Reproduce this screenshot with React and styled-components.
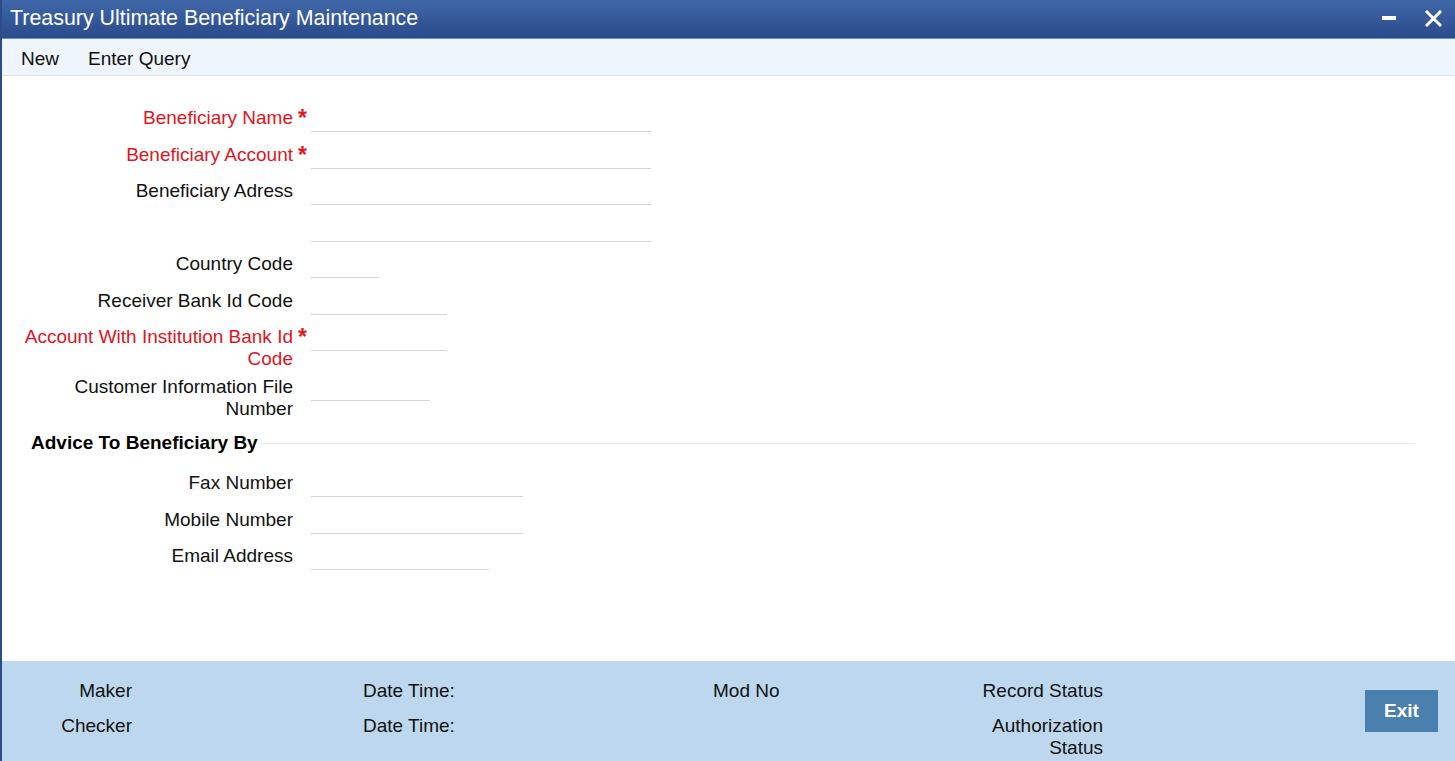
import React from "react";
import styled, { createGlobalStyle } from "styled-components";

const Global = createGlobalStyle`
  html, body { margin: 0; padding: 0; }
  body { font-family: "Liberation Sans", Arial, sans-serif; background: #fff; overflow: hidden; }
  * { box-sizing: border-box; }
`;

const Window = styled.div`
  height: 761px;
  display: flex;
  flex-direction: column;
  border-left: 2px solid #2b4c84;
`;

const TitleBar = styled.div`
  height: 39px;
  flex: none;
  display: flex;
  align-items: center;
  padding: 0 0 2px 8px;
  background: linear-gradient(#4068a9, #2a4a8b);
  border-bottom: 1px solid #7090c0;
  color: #fff;
`;

const Title = styled.div`
  flex: 1;
  font-size: 21.4px;
  line-height: 24px;
`;

const WinButton = styled.button`
  border: 0;
  background: none;
  padding: 0;
  margin: 0 ${(p) => p.$mr}px 0 0;
  width: 20px;
  height: 20px;
  display: flex;
  align-items: center;
  justify-content: center;
  color: #fff;
`;

const Toolbar = styled.div`
  height: 37px;
  flex: none;
  display: flex;
  align-items: center;
  background: #eef5fd;
  border-bottom: 1px solid #dfe4ea;
  padding: 3px 0 0 19px;
  gap: 29px;
`;

const ToolItem = styled.span`
  font-size: 19px;
  color: #111;
`;

const Content = styled.div`
  flex: 1;
  padding-top: 25px;
`;

const Row = styled.div`
  display: flex;
  align-items: flex-start;
  min-height: 36.5px;
`;

const Label = styled.div`
  width: 291px;
  flex: none;
  text-align: right;
  font-size: 19px;
  line-height: 22px;
  padding-top: 6px;
  color: ${(p) => (p.$req ? "#e0141e" : "#111")};
`;

const Star = styled.span`
  width: 18px;
  flex: none;
  color: #e3191b;
  font-size: 23px;
  font-weight: bold;
  line-height: 22px;
  padding: 6px 0 0 5px;
`;

const Input = styled.input`
  width: ${(p) => p.$w}px;
  height: 31px;
  border: 0;
  border-bottom: 1px solid #d5d5d5;
  outline: none;
  background: transparent;
  font: 19px "Liberation Sans", Arial, sans-serif;
  padding: 0 4px;
`;

const Section = styled.div`
  display: flex;
  align-items: center;
  margin: 11px 40px 11px 29px;
  height: 24px;
`;

const SectionTitle = styled.span`
  font-weight: bold;
  font-size: 19px;
  color: #000;
  margin-right: 3px;
`;

const Rule = styled.div`
  flex: 1;
  height: 1px;
  background: #e8e8e8;
`;

const Footer = styled.div`
  height: 100px;
  flex: none;
  background: #bdd8ee;
  display: flex;
  justify-content: space-between;
  padding: 19px 17px 0 0;
`;

const FooterGrid = styled.div`
  display: grid;
  grid-template-columns: 130px 231px 350px 250px 140px;
  row-gap: 13px;
  align-content: start;
  font-size: 19px;
  line-height: 22px;
  color: #111;
`;

const FCell = styled.div`
  text-align: ${(p) => (p.$right ? "right" : "left")};
`;

const ExitButton = styled.button`
  width: 73px;
  height: 42px;
  margin-top: 10px;
  border: 0;
  background: #4a80ae;
  color: #fff;
  font: bold 19px "Liberation Sans", Arial, sans-serif;
`;

const fields = [
  { label: "Beneficiary Name", req: true, w: 340 },
  { label: "Beneficiary Account", req: true, w: 340 },
  { label: "Beneficiary Adress", w: 340 },
  { label: "", w: 340 },
  { label: "Country Code", w: 68 },
  { label: "Receiver Bank Id Code", w: 136 },
  { label: "Account With Institution Bank Id Code", req: true, w: 136 },
  { label: "Customer Information File Number", w: 119 },
];

const advice = [
  { label: "Fax Number", w: 212 },
  { label: "Mobile Number", w: 212 },
  { label: "Email Address", w: 178 },
];

function Field({ label, req, w }) {
  return (
    <Row>
      <Label $req={req}>{label}</Label>
      <Star>{req ? "*" : ""}</Star>
      <Input $w={w} />
    </Row>
  );
}

export default function App() {
  return (
    <>
      <Global />
      <Window>
        <TitleBar>
          <Title>Treasury Ultimate Beneficiary Maintenance</Title>
          <WinButton $mr={24} aria-label="minimize">
            <svg width="14" height="14" viewBox="0 0 14 14">
              <rect x="0" y="5" width="14" height="4" fill="#fff" />
            </svg>
          </WinButton>
          <WinButton $mr={12} aria-label="close">
            <svg width="17" height="17" viewBox="0 0 17 17">
              <path d="M2 2 L15 15 M15 2 L2 15" stroke="#fff" strokeWidth="3" strokeLinecap="square" />
            </svg>
          </WinButton>
        </TitleBar>
        <Toolbar>
          <ToolItem>New</ToolItem>
          <ToolItem>Enter Query</ToolItem>
        </Toolbar>
        <Content>
          {fields.map((f, i) => (
            <Field key={i} {...f} />
          ))}
          <Section>
            <SectionTitle>Advice To Beneficiary By</SectionTitle>
            <Rule />
          </Section>
          {advice.map((f, i) => (
            <Field key={i} {...f} />
          ))}
        </Content>
        <Footer>
          <FooterGrid>
            <FCell $right>Maker</FCell>
            <FCell />
            <FCell>Date Time:</FCell>
            <FCell>Mod No</FCell>
            <FCell $right>Record Status</FCell>
            <FCell $right>Checker</FCell>
            <FCell />
            <FCell>Date Time:</FCell>
            <FCell />
            <FCell $right>Authorization Status</FCell>
          </FooterGrid>
          <ExitButton>Exit</ExitButton>
        </Footer>
      </Window>
    </>
  );
}
